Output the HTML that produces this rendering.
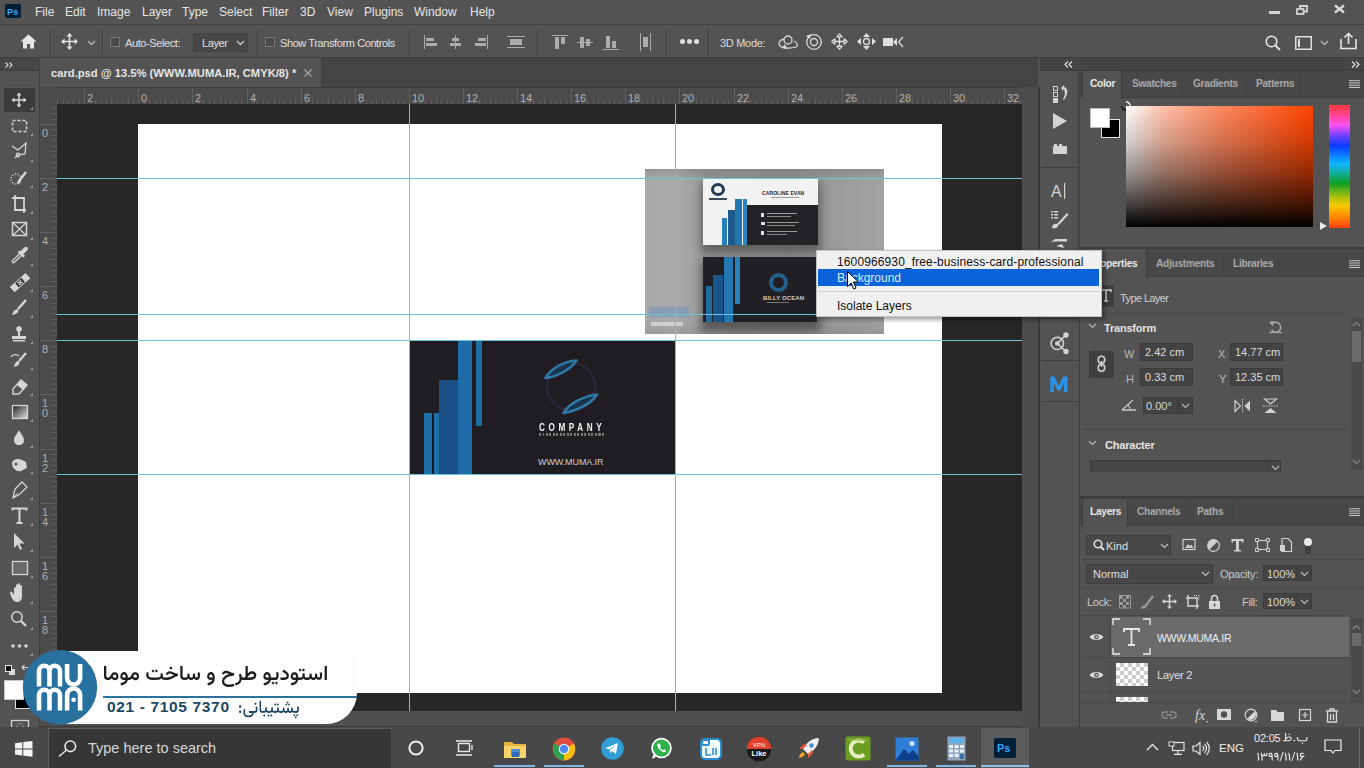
<!DOCTYPE html>
<html><head><meta charset="utf-8">
<style>
*{margin:0;padding:0;box-sizing:border-box}
html,body{width:1364px;height:768px;overflow:hidden;background:#535353;font-family:"Liberation Sans",sans-serif;color:#e6e6e6}
.a{position:absolute}
.t{position:absolute;white-space:nowrap;font-size:12px;line-height:14px}
.s{position:absolute;overflow:visible}
#menubar{left:0;top:0;width:1364px;height:24px;background:#535353}
#opts{left:0;top:24px;width:1364px;height:34px;background:#535353;border-top:1px solid #424242;border-bottom:1px solid #3e3e3e}
#tabbar{left:40px;top:58px;width:998px;height:29px;background:#444}
#tab{left:40px;top:58px;width:281px;height:29px;background:#535353}
#rulerT{left:40px;top:87px;width:982px;height:17px;background:#4b4b4b;border-top:1px solid #3c3c3c}
#rulerL{left:40px;top:87px;width:17px;height:624px;background:#4b4b4b}
#canvas{left:57px;top:104px;width:965px;height:607px;background:#282725}
#doc{left:138px;top:124px;width:804px;height:569px;background:#fff}
#tools{left:0;top:58px;width:40px;height:669px;background:#535353;border-right:1px solid #404040}
#vstrip{left:1022px;top:87px;width:18px;height:640px;background:#4c4c4c;border-right:2px solid #3a3a3a}
#hstrip{left:40px;top:711px;width:982px;height:16px;background:#4f4f4f;border-bottom:1px solid #3a3a3a}
#iconcol{left:1040px;top:58px;width:40px;height:669px;background:#535353;border-right:1px solid #3d3d3d}
#panel{left:1080px;top:58px;width:284px;height:669px;background:#535353}
#taskbar{left:0;top:727px;width:1364px;height:41px;background:#484848}
.gh{position:absolute;left:57px;width:965px;height:1px;background:#66c6e0}
.gv{position:absolute;top:104px;height:607px;width:1px;background:#66c6e0}
.sep{position:absolute;width:2px;background:#3f3f3f;border-right:1px solid #575757}
.rn{position:absolute;font-size:10px;line-height:10px;color:#b4b4b4}
.ptab{position:absolute;font-size:10.2px;line-height:12px;font-weight:bold;color:#a8a8a8;letter-spacing:-0.3px}
.fld{position:absolute;background:#434343;border:1px solid #3b3b3b;font-size:11px;line-height:15px;color:#dcdcdc;padding-left:4px;padding-top:1px}
</style></head><body>
<!-- MENU BAR -->
<div id="menubar" class="a">
  <div class="a" style="left:5px;top:4px;width:16px;height:14px;background:#001e36;border-radius:2px"></div>
  <div class="t" style="left:7px;top:5px;font-size:9px;color:#31a8ff;font-weight:bold">Ps</div>
  <div class="t" style="left:35px;top:5px">File</div>
  <div class="t" style="left:65px;top:5px">Edit</div>
  <div class="t" style="left:97px;top:5px">Image</div>
  <div class="t" style="left:142px;top:5px">Layer</div>
  <div class="t" style="left:182px;top:5px">Type</div>
  <div class="t" style="left:219px;top:5px">Select</div>
  <div class="t" style="left:262px;top:5px">Filter</div>
  <div class="t" style="left:300px;top:5px">3D</div>
  <div class="t" style="left:327px;top:5px">View</div>
  <div class="t" style="left:364px;top:5px">Plugins</div>
  <div class="t" style="left:414px;top:5px">Window</div>
  <div class="t" style="left:470px;top:5px">Help</div>
  <div class="a" style="left:1268.5px;top:11px;width:11px;height:3px;background:#d4d4d4"></div>
  <svg class="s" style="left:1296px;top:5px" width="12" height="10"><rect x="1" y="4" width="6.5" height="5" fill="none" stroke="#d4d4d4" stroke-width="1.8"/><path d="M4 3.5V1h7v5.5H8" fill="none" stroke="#d4d4d4" stroke-width="1.8"/></svg>
  <svg class="s" style="left:1334px;top:5px" width="11" height="8"><path d="M1 0.5L10 7.5M10 0.5L1 7.5" stroke="#dadada" stroke-width="2.3"/></svg>
</div>
<!-- OPTIONS BAR -->
<div id="opts" class="a">
  <svg class="s" style="left:20px;top:9px" width="17" height="15"><path d="M8.5 0.5L0.5 7.5H3V14.5H7V10H10V14.5H14V7.5H16.5Z" fill="#e6e6e6"/></svg>
  <div class="sep" style="left:50px;top:4px;height:25px"></div>
  <svg class="s" style="left:61px;top:8px" width="17" height="17"><path d="M8.5 1V16M1 8.5H16" stroke="#e0e0e0" stroke-width="1.6"/><path d="M8.5 0L5.5 3.5H11.5ZM8.5 17L5.5 13.5H11.5ZM0 8.5L3.5 5.5V11.5ZM17 8.5L13.5 5.5V11.5Z" fill="#e0e0e0"/></svg>
  <svg class="s" style="left:87px;top:15px" width="9" height="6"><path d="M1 1L4.5 4.5L8 1" fill="none" stroke="#b8b8b8" stroke-width="1.3"/></svg>
  <div class="sep" style="left:102px;top:4px;height:25px"></div>
  <div class="a" style="left:110px;top:12px;width:10px;height:10px;border:1px solid #777;background:#4a4a4a"></div>
  <div class="t" style="left:125px;top:11px;font-size:11px;letter-spacing:-0.4px;color:#e0e0e0">Auto-Select:</div>
  <div class="a" style="left:193px;top:8px;width:55px;height:19px;background:#474747;border:1px solid #424242"></div>
  <div class="t" style="left:202px;top:11px;font-size:11px;letter-spacing:-0.4px;color:#e0e0e0">Layer</div>
  <svg class="s" style="left:236px;top:15px" width="9" height="6"><path d="M1 1L4.5 4.5L8 1" fill="none" stroke="#c8c8c8" stroke-width="1.3"/></svg>
  <div class="sep" style="left:257px;top:4px;height:25px"></div>
  <div class="a" style="left:265px;top:12px;width:10px;height:10px;border:1px solid #777;background:#4a4a4a"></div>
  <div class="t" style="left:280px;top:11px;font-size:11px;letter-spacing:-0.4px;color:#e0e0e0">Show Transform Controls</div>
  <div class="sep" style="left:409px;top:4px;height:25px"></div>
  <!-- align icons -->
  <svg class="s" style="left:424px;top:10px" width="14" height="14"><path d="M0.5 0V14" stroke="#ababab"/><rect x="2" y="3" width="8" height="3" fill="#ababab"/><rect x="2" y="8" width="11" height="3" fill="#ababab"/></svg>
  <svg class="s" style="left:449px;top:10px" width="14" height="14"><path d="M6.5 0V14" stroke="#ababab"/><rect x="3" y="3" width="7" height="3" fill="#ababab"/><rect x="1" y="8" width="11" height="3" fill="#ababab"/></svg>
  <svg class="s" style="left:474px;top:10px" width="14" height="14"><path d="M13.5 0V14" stroke="#ababab"/><rect x="4" y="3" width="8" height="3" fill="#ababab"/><rect x="1" y="8" width="11" height="3" fill="#ababab"/></svg>
  <svg class="s" style="left:507px;top:10px" width="18" height="14"><path d="M0 1.5H18M0 12.5H18" stroke="#ababab"/><rect x="3" y="4" width="12" height="6" fill="#ababab"/></svg>
  <div class="sep" style="left:537px;top:4px;height:25px"></div>
  <svg class="s" style="left:552px;top:10px" width="16" height="16"><path d="M0 0.5H16" stroke="#ababab"/><rect x="3" y="2" width="4" height="12" fill="#ababab"/><rect x="9" y="2" width="4" height="7" fill="#ababab"/></svg>
  <svg class="s" style="left:577px;top:10px" width="16" height="16"><path d="M0 7.5H16" stroke="#ababab"/><rect x="3" y="2" width="4" height="11" fill="#ababab"/><rect x="9" y="4" width="4" height="7" fill="#ababab"/></svg>
  <svg class="s" style="left:603px;top:9px" width="16" height="16"><path d="M0 15.5H16" stroke="#ababab"/><rect x="3" y="2" width="4" height="12" fill="#ababab"/><rect x="9" y="7" width="4" height="7" fill="#ababab"/></svg>
  <svg class="s" style="left:640px;top:8px" width="11" height="18"><path d="M0.5 0V18M10.5 0V18" stroke="#ababab"/><rect x="3" y="4" width="5" height="10" fill="#ababab"/></svg>
  <div class="sep" style="left:666px;top:4px;height:25px"></div>
  <div class="a" style="left:680px;top:14px;width:5px;height:5px;border-radius:50%;background:#e0e0e0;box-shadow:7px 0 0 #e0e0e0,14px 0 0 #e0e0e0"></div>
  <div class="sep" style="left:708px;top:4px;height:25px"></div>
  <div class="t" style="left:720px;top:11px;font-size:11px;letter-spacing:-0.3px;color:#dcdcdc">3D Mode:</div>
  <svg class="s" style="left:778px;top:10px" width="21" height="15"><circle cx="10" cy="5" r="4" fill="none" stroke="#d8d8d8" stroke-width="1.3"/><path d="M6 4C1 5 0 8 2 11C4 13 12 14 18 12C20 11 20 8 16 6" fill="none" stroke="#d8d8d8" stroke-width="1.3"/><path d="M4 13L7 9L9 14Z" fill="#d8d8d8"/></svg>
  <svg class="s" style="left:805px;top:8px" width="18" height="18"><circle cx="9" cy="9" r="7.3" fill="none" stroke="#d8d8d8" stroke-width="1.3"/><circle cx="9" cy="9" r="3.5" fill="none" stroke="#d8d8d8" stroke-width="1.3"/><path d="M1 3L6 1L5 6Z" fill="#d8d8d8"/></svg>
  <svg class="s" style="left:831px;top:8px" width="17" height="17"><path d="M8.5 2V15M2 8.5H15" stroke="#e0e0e0" stroke-width="1.3"/><path d="M8.5 0.8L5.8 3.8H11.2ZM8.5 16.2L5.8 13.2H11.2ZM0.8 8.5L3.8 5.8V11.2ZM16.2 8.5L13.2 5.8V11.2Z" fill="#535353" stroke="#e0e0e0" stroke-width="1.2" stroke-linejoin="round"/><path d="M6 6.5H11M6 10.5H11" stroke="#e0e0e0" stroke-width="0"/></svg>
  <svg class="s" style="left:857px;top:8px" width="19" height="17"><circle cx="9.5" cy="8.5" r="3" fill="none" stroke="#e0e0e0" stroke-width="1.3"/><path d="M9.5 0L6 4H13ZM9.5 17L6 13H13ZM0 8.5L4 5V12ZM19 8.5L15 5V12Z" fill="#e0e0e0"/></svg>
  <svg class="s" style="left:883px;top:11px" width="21" height="12"><rect x="0" y="2" width="10" height="8" fill="#e0e0e0"/><path d="M10 6L14 2V10Z" fill="#e0e0e0"/><path d="M20 1L15.5 6L20 11" fill="none" stroke="#e0e0e0" stroke-width="1.2"/></svg>
  <!-- right -->
  <svg class="s" style="left:1265px;top:10px" width="16" height="16"><circle cx="6.5" cy="6.5" r="5.3" fill="none" stroke="#e6e6e6" stroke-width="1.6"/><path d="M10.5 10.5L15 15" stroke="#e6e6e6" stroke-width="1.8"/></svg>
  <svg class="s" style="left:1295px;top:11px" width="17" height="14"><rect x="0.75" y="0.75" width="15.5" height="12.5" fill="none" stroke="#e0e0e0" stroke-width="1.5"/><rect x="3" y="3" width="2" height="8" fill="#e0e0e0"/></svg>
  <svg class="s" style="left:1320px;top:15px" width="9" height="6"><path d="M1 1L4.5 4.5L8 1" fill="none" stroke="#b8b8b8" stroke-width="1.3"/></svg>
  <svg class="s" style="left:1340px;top:7px" width="17" height="18"><path d="M1 7V16.5H16V7" fill="none" stroke="#e6e6e6" stroke-width="1.6"/><path d="M8.5 12V1.5M4.5 5.5L8.5 1.5L12.5 5.5" fill="none" stroke="#e6e6e6" stroke-width="1.6"/></svg>
</div>
<!-- TABS / RULERS / CANVAS -->
<div id="tabbar" class="a"></div>
<div id="tab" class="a"><div class="t" style="left:11px;top:8px;font-weight:bold;font-size:11.2px">card.psd @ 13.5% (WWW.MUMA.IR, CMYK/8) *</div>
<svg class="s" style="left:264px;top:11px" width="8" height="8"><path d="M0.5 0.5L7.5 7.5M7.5 0.5L0.5 7.5" stroke="#a8a8a8" stroke-width="1.1"/></svg></div>
<div id="rulerT" class="a"></div>
<div id="rulerL" class="a"></div>
<!--RULERS-->
<svg class="s" style="left:40px;top:88px" width="982" height="16"><path d="M17.5 10V17M23.5 12V17M28.5 12V17M33.5 12V17M39.5 12V17M44.5 0V17M50.5 12V17M55.5 12V17M61.5 12V17M66.5 12V17M71.5 10V17M77.5 12V17M82.5 12V17M88.5 12V17M93.5 12V17M98.5 0V17M104.5 12V17M109.5 12V17M115.5 12V17M120.5 12V17M125.5 10V17M131.5 12V17M136.5 12V17M142.5 12V17M147.5 12V17M152.5 0V17M158.5 12V17M163.5 12V17M169.5 12V17M174.5 12V17M180.5 10V17M185.5 12V17M190.5 12V17M196.5 12V17M201.5 12V17M207.5 0V17M212.5 12V17M217.5 12V17M223.5 12V17M228.5 12V17M234.5 10V17M239.5 12V17M244.5 12V17M250.5 12V17M255.5 12V17M261.5 0V17M266.5 12V17M272.5 12V17M277.5 12V17M282.5 12V17M288.5 10V17M293.5 12V17M299.5 12V17M304.5 12V17M309.5 12V17M315.5 0V17M320.5 12V17M326.5 12V17M331.5 12V17M336.5 12V17M342.5 10V17M347.5 12V17M353.5 12V17M358.5 12V17M363.5 12V17M369.5 0V17M374.5 12V17M380.5 12V17M385.5 12V17M391.5 12V17M396.5 10V17M401.5 12V17M407.5 12V17M412.5 12V17M418.5 12V17M423.5 0V17M428.5 12V17M434.5 12V17M439.5 12V17M445.5 12V17M450.5 10V17M455.5 12V17M461.5 12V17M466.5 12V17M472.5 12V17M477.5 0V17M483.5 12V17M488.5 12V17M493.5 12V17M499.5 12V17M504.5 10V17M510.5 12V17M515.5 12V17M520.5 12V17M526.5 12V17M531.5 0V17M537.5 12V17M542.5 12V17M547.5 12V17M553.5 12V17M558.5 10V17M564.5 12V17M569.5 12V17M574.5 12V17M580.5 12V17M585.5 0V17M591.5 12V17M596.5 12V17M602.5 12V17M607.5 12V17M612.5 10V17M618.5 12V17M623.5 12V17M629.5 12V17M634.5 12V17M639.5 0V17M645.5 12V17M650.5 12V17M656.5 12V17M661.5 12V17M666.5 10V17M672.5 12V17M677.5 12V17M683.5 12V17M688.5 12V17M694.5 0V17M699.5 12V17M704.5 12V17M710.5 12V17M715.5 12V17M721.5 10V17M726.5 12V17M731.5 12V17M737.5 12V17M742.5 12V17M748.5 0V17M753.5 12V17M758.5 12V17M764.5 12V17M769.5 12V17M775.5 10V17M780.5 12V17M785.5 12V17M791.5 12V17M796.5 12V17M802.5 0V17M807.5 12V17M813.5 12V17M818.5 12V17M823.5 12V17M829.5 10V17M834.5 12V17M840.5 12V17M845.5 12V17M850.5 12V17M856.5 0V17M861.5 12V17M867.5 12V17M872.5 12V17M877.5 12V17M883.5 10V17M888.5 12V17M894.5 12V17M899.5 12V17M904.5 12V17M910.5 0V17M915.5 12V17M921.5 12V17M926.5 12V17M932.5 12V17M937.5 10V17M942.5 12V17M948.5 12V17M953.5 12V17M959.5 12V17M964.5 0V17M969.5 12V17M975.5 12V17M980.5 12V17" stroke="#616161" stroke-width="1"/><g font-size="11" fill="#b0b0b0" font-family="Liberation Sans"><text x="47.0" y="13.5">2</text><text x="101.0" y="13.5">0</text><text x="155.0" y="13.5">2</text><text x="210.0" y="13.5">4</text><text x="264.0" y="13.5">6</text><text x="318.0" y="13.5">8</text><text x="372.0" y="13.5">10</text><text x="426.0" y="13.5">12</text><text x="480.0" y="13.5">14</text><text x="534.0" y="13.5">16</text><text x="588.0" y="13.5">18</text><text x="642.0" y="13.5">20</text><text x="697.0" y="13.5">22</text><text x="751.0" y="13.5">24</text><text x="805.0" y="13.5">26</text><text x="859.0" y="13.5">28</text><text x="913.0" y="13.5">30</text><text x="967.0" y="13.5">32</text></g></svg>
<svg class="s" style="left:40px;top:104px" width="17" height="607"><path d="M12 4.5H17M12 9.5H17M12 15.5H17M0 20.5H17M12 25.5H17M12 31.5H17M12 36.5H17M12 42.5H17M10 47.5H17M12 52.5H17M12 58.5H17M12 63.5H17M12 69.5H17M0 74.5H17M12 80.5H17M12 85.5H17M12 90.5H17M12 96.5H17M10 101.5H17M12 107.5H17M12 112.5H17M12 117.5H17M12 123.5H17M0 128.5H17M12 134.5H17M12 139.5H17M12 144.5H17M12 150.5H17M10 155.5H17M12 161.5H17M12 166.5H17M12 171.5H17M12 177.5H17M0 182.5H17M12 188.5H17M12 193.5H17M12 199.5H17M12 204.5H17M10 209.5H17M12 215.5H17M12 220.5H17M12 226.5H17M12 231.5H17M0 236.5H17M12 242.5H17M12 247.5H17M12 253.5H17M12 258.5H17M10 263.5H17M12 269.5H17M12 274.5H17M12 280.5H17M12 285.5H17M0 290.5H17M12 296.5H17M12 301.5H17M12 307.5H17M12 312.5H17M10 318.5H17M12 323.5H17M12 328.5H17M12 334.5H17M12 339.5H17M0 345.5H17M12 350.5H17M12 355.5H17M12 361.5H17M12 366.5H17M10 372.5H17M12 377.5H17M12 382.5H17M12 388.5H17M12 393.5H17M0 399.5H17M12 404.5H17M12 410.5H17M12 415.5H17M12 420.5H17M10 426.5H17M12 431.5H17M12 437.5H17M12 442.5H17M12 447.5H17M0 453.5H17M12 458.5H17M12 464.5H17M12 469.5H17M12 474.5H17M10 480.5H17M12 485.5H17M12 491.5H17M12 496.5H17M12 501.5H17M0 507.5H17M12 512.5H17M12 518.5H17M12 523.5H17M12 529.5H17M10 534.5H17M12 539.5H17M12 545.5H17M12 550.5H17M12 556.5H17M0 561.5H17M12 566.5H17M12 572.5H17M12 577.5H17M12 583.5H17M10 588.5H17M12 593.5H17M12 599.5H17M12 604.5H17" stroke="#616161" stroke-width="1"/><g font-size="11" fill="#b0b0b0" font-family="Liberation Sans"><text x="2" y="32.5">0</text><text x="2" y="86.5">2</text><text x="2" y="140.5">4</text><text x="2" y="194.5">6</text><text x="2" y="248.5">8</text><text x="2" y="302.5">1</text><text x="2" y="312.5">0</text><text x="2" y="357.5">1</text><text x="2" y="367.5">2</text><text x="2" y="411.5">1</text><text x="2" y="421.5">4</text><text x="2" y="465.5">1</text><text x="2" y="475.5">6</text><text x="2" y="519.5">1</text><text x="2" y="529.5">8</text><text x="2" y="573.5">2</text><text x="2" y="583.5">0</text></g></svg>
<!--/RULERS-->
<div id="canvas" class="a"></div>
<div id="doc" class="a"></div>
<!-- gray mockup image -->
<div class="a" style="left:645px;top:169px;width:239px;height:165px;overflow:hidden;background:linear-gradient(to bottom,rgba(0,0,0,0.12) 0,rgba(0,0,0,0) 12px,rgba(0,0,0,0) 150px,rgba(0,0,0,0.08) 165px),linear-gradient(to right,#a9a9a9 0%,#ababab 14%,#989898 26%,#939393 60%,#9a9a9a 76%,#a3a3a3 100%)">
<div class="a" style="left:56px;top:14px;width:120px;height:70px;background:rgba(30,30,30,0.45);filter:blur(4px)"></div>
<div class="a" style="left:56px;top:92px;width:120px;height:70px;background:rgba(30,30,30,0.5);filter:blur(4px)"></div></div>
<div class="a" style="left:703px;top:179px;width:115px;height:66px;background:#f2f2f2;overflow:hidden">
  <div class="a" style="left:42px;top:26px;width:73px;height:40px;background:#232327"></div>
  <div class="a" style="left:19px;top:39px;width:5px;height:27px;background:#2b7fb8"></div>
  <div class="a" style="left:25px;top:31px;width:7px;height:35px;background:#1d5a8e"></div>
  <div class="a" style="left:32px;top:20px;width:7px;height:46px;background:#2377b0"></div>
  <div class="a" style="left:40px;top:20px;width:4px;height:46px;background:#2a86c0"></div>
  <div class="a" style="left:8px;top:4px;width:14px;height:13px;border-radius:50%;border:3px solid #223a55"></div>
  <div class="a" style="left:6px;top:19px;width:18px;height:2px;background:#3a4a5a"></div>
  <div class="t" style="left:59px;top:11px;font-size:5px;line-height:6px;font-weight:bold;color:#2a2a2a;letter-spacing:0.1px">CAROLINE EVAN</div>
  <div class="a" style="left:68px;top:18px;width:28px;height:1px;background:#999"></div>
  <div class="a" style="left:58px;top:34px;width:3px;height:4px;background:#ddd"></div>
  <div class="a" style="left:64px;top:34px;width:30px;height:1px;background:#999"></div>
  <div class="a" style="left:64px;top:37px;width:24px;height:1px;background:#888"></div>
  <div class="a" style="left:58px;top:43px;width:4px;height:3px;background:#ddd"></div>
  <div class="a" style="left:64px;top:43px;width:32px;height:1px;background:#999"></div>
  <div class="a" style="left:64px;top:46px;width:28px;height:1px;background:#888"></div>
  <div class="a" style="left:58px;top:52px;width:3px;height:4px;background:#ddd"></div>
  <div class="a" style="left:64px;top:52px;width:30px;height:1px;background:#999"></div>
  <div class="a" style="left:64px;top:55px;width:20px;height:1px;background:#888"></div>
</div>
<div class="a" style="left:703px;top:257px;width:114px;height:65px;background:#202024;overflow:hidden">
  <div class="a" style="left:3px;top:29px;width:6px;height:36px;background:#1f6aa0"></div>
  <div class="a" style="left:10px;top:18px;width:10px;height:47px;background:#1a548a"></div>
  <div class="a" style="left:21px;top:0px;width:9px;height:65px;background:#2478b2"></div>
  <div class="a" style="left:32px;top:0px;width:5px;height:47px;background:#2a82ba"></div>
  <div class="a" style="left:66px;top:16px;width:19px;height:19px;border-radius:50%;border:4px solid #255f8c"></div>
  <div class="t" style="left:60px;top:38px;font-size:6px;line-height:6px;font-weight:bold;color:#d0d0d0;letter-spacing:0.1px">BILLY OCEAN</div>
  <div class="a" style="left:64px;top:45px;width:22px;height:1px;background:#777"></div>
</div>
<div class="a" style="left:649px;top:307px;width:40px;height:10px;background:rgba(70,130,200,0.35);filter:blur(1.5px)"></div>
<div class="a" style="left:651px;top:322px;width:32px;height:4px;background:rgba(235,235,235,0.6)"></div>
<!-- dark card -->
<div class="a" style="left:410px;top:341px;width:265px;height:133px;background:#1f1d22;overflow:hidden">
  <div class="a" style="left:14px;top:72px;width:8px;height:61px;background:#1e6fa5"></div>
  <div class="a" style="left:24px;top:72px;width:8px;height:61px;background:#1e6fa5"></div>
  <div class="a" style="left:29px;top:39px;width:19px;height:94px;background:#1a4f85"></div>
  <div class="a" style="left:48px;top:0;width:14px;height:133px;background:#1f6aa8"></div>
  <div class="a" style="left:66px;top:0;width:6px;height:85px;background:#1c6ea0"></div>
  <svg class="s" style="left:133px;top:18px" width="58" height="56">
    <circle cx="28" cy="27.5" r="24" fill="none" stroke="#2a2536" stroke-width="3"/>
    <path d="M2.5 19C8 9 22 2 33.5 1.5C29 9 15 18 2.5 19Z" fill="#18334c" stroke="#2f78a6" stroke-width="2.6" stroke-linejoin="round"/>
    <path d="M20.5 54C26 44 41 37 54 35.5C49 44 34 52 20.5 54Z" fill="#18334c" stroke="#2f78a6" stroke-width="2.6" stroke-linejoin="round"/>
  </svg>
  <div class="t" style="left:129px;top:81px;font-size:11px;line-height:11px;font-weight:bold;color:#f4f4f4;letter-spacing:4.9px;transform:scaleX(0.74);transform-origin:0 0">COMPANY</div>
  <div class="a" style="left:129px;top:92px;width:65px;height:3px;background:repeating-linear-gradient(to right,#777 0 2px,transparent 2px 3.5px)"></div>
  <div class="t" style="left:128px;top:117px;font-size:9px;line-height:9px;color:#cfcfcf;letter-spacing:-0.1px">WWW.MUMA.IR</div>
</div>
<div class="gh" style="top:178px"></div>
<div class="gh" style="top:314px"></div>
<div class="gh" style="top:340px"></div>
<div class="gh" style="top:474px"></div>
<div class="gv" style="left:409px"></div>
<div class="gv" style="left:675px"></div>
<div id="vstrip" class="a"></div>
<div id="hstrip" class="a"></div>
<!-- TOOLS -->
<div id="tools" class="a">
  <div class="a" style="left:0;top:0;width:39px;height:13px;background:#464646;border-bottom:1px solid #3c3c3c"></div>
  <svg class="s" style="left:5px;top:4px" width="9" height="6"><path d="M0.5 0.5L3 3L0.5 5.5M4.5 0.5L7 3L4.5 5.5" fill="none" stroke="#d0d0d0" stroke-width="1.2"/></svg>
  <div class="a" style="left:4px;top:16px;width:31px;height:12px;border-bottom:1px solid #4a4a4a"></div>
  <div class="a" style="left:4px;top:30px;width:31px;height:24px;background:#3b3b3b"></div>
</div>
<svg class="s" style="left:0;top:58px" width="40" height="669">
 <g fill="#d6d6d6" stroke="none">
  <!-- small triangles -->
  <path d="M30 52h3v-3zM30 78h3v-3zM30 104h3v-3zM30 130h3v-3zM30 156h3v-3zM30 182h3v-3zM30 208h3v-3zM30 234h3v-3zM30 260h3v-3zM30 286h3v-3zM30 312h3v-3zM30 338h3v-3zM30 364h3v-3zM30 390h3v-3zM30 416h3v-3zM30 442h3v-3zM30 468h3v-3zM30 494h3v-3zM30 520h3v-3zM30 546h3v-3zM30 572h3v-3zM30 598h3v-3z" fill="#9a9a9a"/>
 </g>
 <g fill="none" stroke="#d6d6d6" stroke-width="1.5">
  <!-- move y42 -->
  <path d="M19 35V49M12 42H26"/>
  <path d="M19 34.5L16.5 37.5H21.5ZM19 49.5L16.5 46.5H21.5ZM11.5 42L14.5 39.5V44.5ZM26.5 42L23.5 39.5V44.5Z" fill="#d6d6d6" stroke="none"/>
  <!-- marquee y68 -->
  <rect x="12.5" y="62.5" width="14" height="11" stroke-dasharray="3 2"/>
  <!-- lasso y93 -->
  <path d="M12 88L18 92L26 85L25 96L18 97L15 100" stroke-width="1.3"/>
  <circle cx="18" cy="97" r="1.8" stroke-width="1.2"/>
  <!-- quick select y120 -->
  <circle cx="16" cy="121" r="5" stroke-dasharray="1.2 1.5" stroke-width="1.4"/>
  <path d="M19 123L26 114" stroke-width="2.5"/>
  <path d="M17 126C17 122 19 121 21 123C21 125 19 126 17 126Z" fill="#d6d6d6" stroke="none"/>
  <!-- crop y145 -->
  <path d="M15 137V152H26M12 140H24V155" stroke-width="1.8"/>
  <!-- frame y171 -->
  <rect x="12.5" y="164.5" width="14" height="13"/>
  <path d="M12.5 164.5L26.5 177.5M26.5 164.5L12.5 177.5" stroke-width="1.2"/>
  <!-- eyedropper y197 -->
  <path d="M13.6 203.4L20.6 196.4" stroke-width="3.8" stroke-linecap="round"/>
  <path d="M13.6 203.4L20.6 196.4" stroke="#535353" stroke-width="1.3" stroke-linecap="round"/>
  <path d="M21.8 194.8L26 190.8" stroke-width="4" stroke-linecap="round"/>
  <path d="M18.6 193.4L24.2 198.8" stroke-width="2.6"/>
  <!-- healing y224 -->
  <path d="M12.2 231.6L28 217.6" stroke-width="7.2"/>
  <path d="M17 227.3L23.2 221.9" stroke="#3a3a3a" stroke-width="5.6"/>
  <circle cx="20.1" cy="224.6" r="0.9" fill="#e6e6e6" stroke="none"/><circle cx="18.3" cy="224.4" r="0.9" fill="#e6e6e6" stroke="none"/><circle cx="21.9" cy="224.8" r="0.9" fill="#e6e6e6" stroke="none"/><circle cx="20.3" cy="222.8" r="0.9" fill="#e6e6e6" stroke="none"/><circle cx="19.9" cy="226.4" r="0.9" fill="#e6e6e6" stroke="none"/>
  <!-- brush y250 -->
  <path d="M18 251L26 242" stroke-width="2.5"/>
  <path d="M12 257C13 253 15 251 18 251C19 253 18 256 12 257Z" fill="#d6d6d6" stroke="none"/>
  <!-- stamp y275 -->
  <circle cx="19" cy="271" r="2.8" fill="#d6d6d6" stroke="none"/>
  <path d="M18 273h2v5h-2zM12 278h14v3h-14zM13 282h12v1.5h-12z" fill="#d6d6d6" stroke="none"/>
  <!-- history brush y302 -->
  <path d="M19 303L26 295" stroke-width="2.3"/>
  <path d="M14 309C15 305 16 303 19 303C20 305 19 308 14 309Z" fill="#d6d6d6" stroke="none"/>
  <path d="M11 299C13 296 17 296 19 298" stroke-width="1.2"/>
  <!-- eraser y329 -->
  <path d="M13 331L21 322L27 327L19 336H13Z" stroke-width="1.4"/>
  <path d="M17 327L23 332L27 327L21 322Z" fill="#d6d6d6" stroke="none"/>
  <!-- gradient y354 -->
  <defs><linearGradient id="gg" x1="0" y1="0" x2="1" y2="1"><stop offset="0" stop-color="#222"/><stop offset="1" stop-color="#ddd"/></linearGradient></defs>
  <rect x="12.5" y="347.5" width="15" height="13" fill="url(#gg)" stroke-width="1.3"/>
  <!-- blur y381 -->
  <path d="M19 372C17 376 14 379 14 382C14 385 16 387 19 387C22 387 24 385 24 382C24 379 21 376 19 372Z" fill="#d6d6d6" stroke="none"/>
  <!-- dodge y406 -->
  <path d="M12 405C13 401 18 400 22 402L26 404L27 410L21 413C17 414 12 411 12 405Z" fill="#d6d6d6" stroke="none"/>
  <circle cx="16" cy="406" r="1.5" fill="#535353" stroke="none"/>
  <!-- pen y432 -->
  <path d="M13 440L15 431L22 424L27 429L20 436Z" stroke-width="1.3"/>
  <path d="M13 440L18 435" stroke-width="1"/>
  <!-- type y458 -->
  <path d="M12.5 452.5V450.5H26.5V452.5M19.5 450.5V465M16.5 465H22.5" stroke-width="2"/>
  <!-- path select y483 -->
  <path d="M14 475L14 490L17.5 486.5L20 492L22 491L19.5 485.5L24.5 485.5Z" fill="#d6d6d6" stroke="none"/>
  <!-- rect y510 -->
  <rect x="12.5" y="503.5" width="15" height="13" fill="#6a6a6a" stroke-width="1.3"/>
  <!-- hand y536 -->
  <path d="M14 537V530C14 529 16 529 16 530V535V527C16 526 18 526 18 527V535V526C18 525 20 525 20 526V535V528C20 527 22 527 22 528V538C22 542 20 544 17 544C14 544 12 541 11 538L10 535C10 534 11 533 12 534Z" fill="#d6d6d6" stroke="none"/>
  <!-- zoom y561 -->
  <circle cx="17" cy="559" r="5.2" stroke-width="1.5"/>
  <path d="M21 563L26 568" stroke-width="2.3"/>
  <!-- more y588 -->
  <circle cx="13" cy="588" r="1.8" fill="#d6d6d6" stroke="none"/><circle cx="19.5" cy="588" r="1.8" fill="#d6d6d6" stroke="none"/><circle cx="26" cy="588" r="1.8" fill="#d6d6d6" stroke="none"/>
  <!-- fg bg mini -->
  <rect x="9.5" y="611.5" width="5" height="5" fill="#d6d6d6" stroke="#d6d6d6" stroke-width="1"/>
  <rect x="5.5" y="607.5" width="6" height="6" fill="#111" stroke="#e6e6e6" stroke-width="1"/>
  <path d="M22 609.5H28M24.5 607L22 609.5L24.5 612" stroke-width="1.2"/>
  <!-- bg / fg swatches -->
  <rect x="15.5" y="632.5" width="16" height="18" fill="#000" stroke="#e0e0e0" stroke-width="1"/>
  <rect x="4.5" y="622.5" width="19" height="19" fill="#fff" stroke="#c8c8c8" stroke-width="1"/>
  <!-- quick mask -->
  <rect x="11.5" y="662.5" width="17" height="12" stroke-width="1.3"/>
  <circle cx="20" cy="668.5" r="3" stroke-dasharray="1 1.2" stroke-width="1"/>
 </g>
</svg>
<!-- RIGHT -->
<div id="iconcol" class="a"></div>
<div id="panel" class="a"></div>
<div class="a" style="left:1040px;top:58px;width:324px;height:13px;background:#444;border-bottom:1px solid #3a3a3a"></div>
<svg class="s" style="left:1064px;top:61px" width="9" height="7"><path d="M4 0.5L1 3.5L4 6.5M8 0.5L5 3.5L8 6.5" fill="none" stroke="#d8d8d8" stroke-width="1.3"/></svg>
<svg class="s" style="left:1351px;top:61px" width="9" height="7"><path d="M1 0.5L4 3.5L1 6.5M5 0.5L8 3.5L5 6.5" fill="none" stroke="#d8d8d8" stroke-width="1.3"/></svg>
<!-- icon column groups -->
<div class="a" style="left:1041px;top:72px;width:37px;height:96px;border-bottom:1px solid #3f3f3f;border-right:1px solid #474747"></div>
<div class="a" style="left:1041px;top:168px;width:37px;height:88px;border-right:1px solid #474747"></div>
<div class="a" style="left:1041px;top:318px;width:37px;height:84px;border-top:1px solid #3f3f3f;border-bottom:1px solid #3f3f3f"></div>
<div class="a" style="left:1041px;top:360px;width:37px;height:1px;background:#3f3f3f"></div>
<svg class="s" style="left:1040px;top:72px" width="40" height="330">
 <g fill="#d4d4d4">
  <rect x="13.5" y="14.5" width="4" height="4" fill="none" stroke="#d4d4d4"/>
  <rect x="13.5" y="20.5" width="4" height="4" fill="none" stroke="#d4d4d4"/>
  <rect x="13" y="26" width="5" height="5"/>
  <path d="M21 16L24 13L24 15C28 16 29 21 24 28L23 27C26 22 25 18 23 17L23 19Z"/>
  <path d="M13 41V57L27 49Z"/>
  <path d="M13 74H27V82H13ZM14 72H17V74H14ZM19 72H22V74H19Z"/>
  <text x="11" y="125" font-size="16" font-family="Liberation Sans" fill="#d4d4d4">A</text>
  <rect x="24" y="111" width="1.2" height="16"/>
  <path d="M11 139h2v1.5h-2zM14 139h4v1.5h-4zM11 142h2v1.5h-2zM14 142h4v1.5h-4zM11 145h2v1.5h-2zM14 145h4v1.5h-4z"/>
  <path d="M17 152L27 141L28.5 142.5L19 153Z"/>
  <path d="M12 156C12 152 15 151 18 152C19 155 16 157 12 156Z"/>
  <path d="M11 170L15 167H27V169.5H15Z"/>
  <path d="M16 174L22 172L24 176Z"/>
 </g>
 <g fill="none" stroke="#d4d4d4" stroke-width="1.5">
  <circle cx="17.3" cy="271.4" r="6.2"/>
  <path d="M17.3 271.4L26 263M17.3 271.4L26 279.5"/>
 </g>
 <g fill="#d4d4d4"><circle cx="26" cy="263" r="2.7"/><circle cx="26" cy="279.5" r="2.7"/><circle cx="17.3" cy="271.4" r="2.2"/></g>
 <path d="M10.3 320.2V304.6H14.3L18.8 313.5L23.3 304.6H27.5V320.2H24V311L20.2 318.5H17.4L13.8 311V320.2Z" fill="#2a93e8"/>
</svg>
<!-- COLOR PANEL -->
<div class="a" style="left:1080px;top:71px;width:284px;height:27px;background:#484848;border-bottom:1px solid #404040"></div>
<div class="a" style="left:1082px;top:71px;width:40px;height:28px;background:#535353;border-left:1px solid #3c3c3c;border-right:1px solid #3f3f3f"></div>
<div class="a" style="left:1182px;top:74px;width:1px;height:22px;background:#404040"></div>
<div class="a" style="left:1246px;top:74px;width:1px;height:22px;background:#404040"></div>
<div class="a" style="left:1300px;top:74px;width:1px;height:22px;background:#404040"></div>
<div class="ptab" style="left:1090px;top:78px;color:#e8e8e8">Color</div>
<div class="ptab" style="left:1132px;top:78px">Swatches</div>
<div class="ptab" style="left:1193px;top:78px">Gradients</div>
<div class="ptab" style="left:1256px;top:78px">Patterns</div>
<svg class="s" style="left:1349px;top:80px" width="11" height="9"><path d="M0 0.75H11M0 3H11M0 5.25H11M0 7.5H11" stroke="#c8c8c8" stroke-width="1.1"/></svg>
<div class="a" style="left:1101px;top:119px;width:19px;height:19px;background:#000;border:1px solid #e0e0e0"></div>
<div class="a" style="left:1090px;top:108px;width:20px;height:20px;background:#fff;border:1px solid #bbb"></div>
<div class="a" style="left:1126px;top:106px;width:187px;height:121px;background:linear-gradient(to bottom,rgba(0,0,0,0) 0%,rgba(0,0,0,0.18) 30%,rgba(0,0,0,0.42) 55%,rgba(0,0,0,0.72) 80%,#000 100%),linear-gradient(to right,#fff 0%,#ffc0a8 20%,#ff8a60 50%,#ff4400 100%)"></div>
<svg class="s" style="left:1121px;top:101px" width="10" height="10"><path d="M5 0.8A4.2 4.2 0 0 1 9.2 5" fill="none" stroke="#fff" stroke-width="1.2"/><path d="M0.8 5A4.2 4.2 0 0 0 5 9.2" fill="none" stroke="#000" stroke-width="1.2"/></svg>
<div class="a" style="left:1329px;top:105px;width:21px;height:123px;background:linear-gradient(to bottom,#ff3838 0%,#ff50f0 16%,#7040ff 25%,#0a3cff 33%,#10b8ff 48%,#10a020 64%,#a0c010 74%,#f8c800 82%,#ff7800 93%,#ff4010 100%)"></div>
<svg class="s" style="left:1319px;top:221px" width="9" height="10"><path d="M1 1V9L8 5Z" fill="#e8e8e8"/></svg>
<div class="a" style="left:1080px;top:247px;width:284px;height:2px;background:#3e3e3e"></div>
<!-- PROPERTIES PANEL -->
<div class="a" style="left:1080px;top:249px;width:284px;height:28px;background:#484848;border-bottom:1px solid #404040"></div>
<div class="a" style="left:1082px;top:249px;width:65px;height:29px;background:#535353;border-left:1px solid #3c3c3c;border-right:1px solid #3f3f3f"></div>
<div class="a" style="left:1223px;top:253px;width:1px;height:22px;background:#404040"></div>
<div class="a" style="left:1278px;top:253px;width:1px;height:22px;background:#404040"></div>
<div class="ptab" style="left:1090px;top:258px;color:#e8e8e8">Properties</div>
<div class="ptab" style="left:1156px;top:258px">Adjustments</div>
<div class="ptab" style="left:1233px;top:258px">Libraries</div>
<svg class="s" style="left:1349px;top:260px" width="11" height="9"><path d="M0 0.75H11M0 3H11M0 5.25H11M0 7.5H11" stroke="#c8c8c8" stroke-width="1.1"/></svg>
<div class="a" style="left:1099px;top:285px;width:15px;height:22px;background:#3f3f3f"></div>
<svg class="s" style="left:1100px;top:289px" width="12" height="13"><path d="M1 3V1H11V3M6 1V12M4 12H8" fill="none" stroke="#d0d0d0" stroke-width="1.5"/></svg>
<div class="t" style="left:1120px;top:291px;font-size:11px;color:#cfcfcf;letter-spacing:-0.6px">Type Layer</div>
<div class="a" style="left:1082px;top:313px;width:264px;height:1px;background:#474747"></div>
<svg class="s" style="left:1088px;top:323px" width="9" height="6"><path d="M1 1L4.5 4.5L8 1" fill="none" stroke="#b8b8b8" stroke-width="1.2"/></svg>
<div class="t" style="left:1104px;top:321px;font-size:11px;font-weight:bold;color:#e4e4e4;letter-spacing:-0.2px">Transform</div>
<svg class="s" style="left:1268px;top:320px" width="15" height="14"><path d="M3.5 4.5A5 5 0 1 1 3.5 10" fill="none" stroke="#aaa" stroke-width="1.4"/><path d="M1 2L5 6L6 1Z" fill="#aaa"/><path d="M1 12.5H14" stroke="#aaa" stroke-width="1.2"/></svg>
<div class="a" style="left:1089px;top:351px;width:25px;height:27px;background:#3f3f3f"></div>
<svg class="s" style="left:1096px;top:355px" width="11" height="18"><rect x="2.2" y="1.2" width="6.5" height="7" rx="3.2" fill="none" stroke="#d0d0d0" stroke-width="1.6"/><rect x="2.2" y="9.2" width="6.5" height="7" rx="3.2" fill="none" stroke="#d0d0d0" stroke-width="1.6"/><path d="M5.5 6V12" stroke="#d0d0d0" stroke-width="1.6"/></svg>
<div class="t" style="left:1124px;top:347px;font-size:11px;color:#b8b8b8">W</div>
<div class="fld" style="left:1140px;top:343px;width:53px;height:18px">2.42 cm</div>
<div class="t" style="left:1218px;top:347px;font-size:11px;color:#b8b8b8">X</div>
<div class="fld" style="left:1230px;top:343px;width:53px;height:18px">14.77 cm</div>
<div class="t" style="left:1126px;top:372px;font-size:11px;color:#b8b8b8">H</div>
<div class="fld" style="left:1140px;top:368px;width:53px;height:18px">0.33 cm</div>
<div class="t" style="left:1219px;top:372px;font-size:11px;color:#b8b8b8">Y</div>
<div class="fld" style="left:1230px;top:368px;width:53px;height:18px">12.35 cm</div>
<svg class="s" style="left:1121px;top:399px" width="16" height="12"><path d="M1 11H15M1 11L12 1" fill="none" stroke="#c8c8c8" stroke-width="1.3"/><path d="M7 6A6 6 0 0 1 9 11" fill="none" stroke="#c8c8c8" stroke-width="1.1"/></svg>
<div class="fld" style="left:1143px;top:397px;width:50px;height:17px;line-height:14px;padding-left:2px">0.00&#176;</div>
<div class="a" style="left:1178px;top:398px;width:1px;height:15px;background:#3b3b3b"></div>
<svg class="s" style="left:1181px;top:403px" width="9" height="6"><path d="M1 1L4.5 4.5L8 1" fill="none" stroke="#b8b8b8" stroke-width="1.2"/></svg>
<svg class="s" style="left:1234px;top:399px" width="17" height="14"><path d="M1 1.5V12.5L6.5 7Z" fill="none" stroke="#d0d0d0" stroke-width="1.2"/><path d="M16 1.5V12.5L10.5 7Z" fill="#d0d0d0"/><path d="M8.5 0V14" stroke="#d0d0d0" stroke-dasharray="1.5 1.2"/></svg>
<svg class="s" style="left:1263px;top:398px" width="15" height="16"><path d="M1.5 1H13.5L7.5 6Z" fill="none" stroke="#d0d0d0" stroke-width="1.2"/><path d="M1.5 15H13.5L7.5 10Z" fill="#d0d0d0"/><path d="M0 8H15" stroke="#d0d0d0" stroke-dasharray="1.5 1.2"/></svg>
<div class="a" style="left:1082px;top:429px;width:264px;height:1px;background:#474747"></div>
<svg class="s" style="left:1088px;top:440px" width="9" height="6"><path d="M1 1L4.5 4.5L8 1" fill="none" stroke="#b8b8b8" stroke-width="1.2"/></svg>
<div class="t" style="left:1105px;top:438px;font-size:11px;font-weight:bold;color:#e4e4e4;letter-spacing:-0.2px">Character</div>
<div class="a" style="left:1090px;top:460px;width:191px;height:12px;background:#454545;border:1px solid #3b3b3b;border-bottom:none"></div>
<div class="a" style="left:1268px;top:460px;width:1px;height:12px;background:#3b3b3b"></div>
<svg class="s" style="left:1271px;top:465px" width="9" height="6"><path d="M1 1L4.5 4.5L8 1" fill="none" stroke="#b8b8b8" stroke-width="1.2"/></svg>
<div class="a" style="left:1351px;top:318px;width:11px;height:152px;background:#4a4a4a"></div>
<svg class="s" style="left:1352px;top:321px" width="9" height="6"><path d="M1 5L4.5 1.5L8 5" fill="none" stroke="#8a8a8a" stroke-width="1.1"/></svg>
<div class="a" style="left:1352px;top:331px;width:9px;height:31px;background:#6a6a6a"></div>
<svg class="s" style="left:1352px;top:459px" width="9" height="6"><path d="M1 1L4.5 4.5L8 1" fill="none" stroke="#8a8a8a" stroke-width="1.1"/></svg>
<div class="a" style="left:1080px;top:496px;width:284px;height:3px;background:#3e3e3e"></div>
<!-- LAYERS PANEL -->
<div class="a" style="left:1080px;top:499px;width:284px;height:27px;background:#484848;border-bottom:1px solid #404040"></div>
<div class="a" style="left:1082px;top:499px;width:46px;height:28px;background:#535353;border-left:1px solid #3c3c3c;border-right:1px solid #3f3f3f"></div>
<div class="a" style="left:1186px;top:503px;width:1px;height:22px;background:#404040"></div>
<div class="a" style="left:1232px;top:503px;width:1px;height:22px;background:#404040"></div>
<div class="ptab" style="left:1090px;top:506px;color:#e8e8e8">Layers</div>
<div class="ptab" style="left:1137px;top:506px">Channels</div>
<div class="ptab" style="left:1197px;top:506px">Paths</div>
<svg class="s" style="left:1349px;top:508px" width="11" height="9"><path d="M0 0.75H11M0 3H11M0 5.25H11M0 7.5H11" stroke="#c8c8c8" stroke-width="1.1"/></svg>
<div class="a" style="left:1086px;top:535px;width:85px;height:20px;background:#474747;border:1px solid #3d3d3d"></div>
<svg class="s" style="left:1093px;top:539px" width="12" height="12"><circle cx="5" cy="5" r="3.8" fill="none" stroke="#e0e0e0" stroke-width="1.6"/><path d="M7.8 7.8L11 11" stroke="#e0e0e0" stroke-width="2"/></svg>
<div class="t" style="left:1106px;top:539px;font-size:11px;color:#e0e0e0">Kind</div>
<svg class="s" style="left:1160px;top:543px" width="9" height="6"><path d="M1 1L4.5 4.5L8 1" fill="none" stroke="#c0c0c0" stroke-width="1.2"/></svg>
<svg class="s" style="left:1182px;top:537px" width="135" height="18">
 <g fill="none" stroke="#d0d0d0" stroke-width="1.2"><rect x="1" y="2.5" width="12" height="10"/></g>
 <path d="M3 11L6 7L8 9L9.5 7.5L11.5 11Z" fill="#d0d0d0"/>
 <circle cx="31.5" cy="8.5" r="5.8" fill="none" stroke="#d0d0d0" stroke-width="1.3"/><path d="M27.4 12.6L35.6 4.4A5.8 5.8 0 0 0 27.4 12.6Z" fill="#d0d0d0"/>
 <path d="M49.5 2H61.5V5.5H60L59.5 4H57V13H59V14.5H52V13H54V4H51.5L51 5.5H49.5Z" fill="#d0d0d0"/>
 <rect x="75.5" y="3.5" width="10" height="9" fill="none" stroke="#d0d0d0" stroke-width="1.2"/>
 <path d="M73.5 1.5h3v3h-3zM84.5 1.5h3v3h-3zM73.5 11.5h3v3h-3zM84.5 11.5h3v3h-3z" fill="#535353" stroke="#d0d0d0" stroke-width="1"/>
 <path d="M100 1.5H106L109.5 5V14.5H100Z" fill="none" stroke="#d0d0d0" stroke-width="1.2"/>
 <rect x="98" y="8" width="5" height="6" fill="#d0d0d0"/>
 <rect x="123" y="8" width="6" height="9" rx="1" fill="#3e3e3e"/>
 <circle cx="126" cy="5" r="4" fill="#e8e8e8"/>
</svg>
<div class="a" style="left:1082px;top:559px;width:282px;height:1px;background:#474747"></div>
<div class="a" style="left:1086px;top:564px;width:127px;height:20px;background:#474747;border:1px solid #3d3d3d"></div>
<div class="t" style="left:1093px;top:567px;font-size:11px;color:#e0e0e0">Normal</div>
<svg class="s" style="left:1201px;top:571px" width="9" height="6"><path d="M1 1L4.5 4.5L8 1" fill="none" stroke="#c0c0c0" stroke-width="1.2"/></svg>
<div class="t" style="left:1220px;top:567px;font-size:11px;color:#c8c8c8;letter-spacing:-0.3px">Opacity:</div>
<div class="fld" style="left:1263px;top:565px;width:49px;height:16px;line-height:14px;padding-left:3px">100%</div>
<div class="a" style="left:1296px;top:566px;width:1px;height:14px;background:#3b3b3b"></div>
<svg class="s" style="left:1300px;top:571px" width="9" height="6"><path d="M1 1L4.5 4.5L8 1" fill="none" stroke="#c0c0c0" stroke-width="1.2"/></svg>
<div class="a" style="left:1082px;top:587px;width:282px;height:1px;background:#474747"></div>
<div class="t" style="left:1087px;top:595px;font-size:11px;color:#c8c8c8;letter-spacing:-0.3px">Lock:</div>
<svg class="s" style="left:1119px;top:594px" width="102" height="15">
 <path d="M1 2h3v3h-3zM7 2h3v3h-3zM4 5h3v3h-3zM1 8h3v3h-3zM7 8h3v3h-3zM4 11h3v3h-3z" fill="#9a9a9a"/>
 <rect x="0.5" y="1.5" width="11" height="12.5" fill="none" stroke="#9a9a9a" stroke-width="1"/>
 <path d="M25 14L34 2" stroke="#9a9a9a" stroke-width="2.2"/><path d="M22 15C22 12 24 11 26 12C26 14 24 15 22 15Z" fill="#9a9a9a"/>
 <path d="M50.5 1V14M44 7.5H57" stroke="#d8d8d8" stroke-width="1.4"/><path d="M50.5 0L48 2.5H53ZM50.5 15L48 12.5H53ZM43 7.5L45.5 5V10ZM58 7.5L55.5 5V10Z" fill="#d8d8d8"/>
 <path d="M69 1V12H80M67 4H78V15" fill="none" stroke="#d8d8d8" stroke-width="1.4"/><path d="M75 1.5H80V6" fill="none" stroke="#d8d8d8" stroke-dasharray="1 1"/>
 <rect x="90" y="7" width="11" height="8" fill="#d8d8d8"/><path d="M92.5 7V4.5A3 3 0 0 1 98.5 4.5V7" fill="none" stroke="#d8d8d8" stroke-width="1.6"/><rect x="94.8" y="9.5" width="1.5" height="3" fill="#535353"/>
</svg>
<div class="t" style="left:1242px;top:595px;font-size:11px;color:#c8c8c8;letter-spacing:-0.3px">Fill:</div>
<div class="fld" style="left:1263px;top:593px;width:49px;height:16px;line-height:14px;padding-left:3px">100%</div>
<div class="a" style="left:1296px;top:594px;width:1px;height:14px;background:#3b3b3b"></div>
<svg class="s" style="left:1300px;top:599px" width="9" height="6"><path d="M1 1L4.5 4.5L8 1" fill="none" stroke="#c0c0c0" stroke-width="1.2"/></svg>
<div class="a" style="left:1082px;top:615px;width:266px;height:1px;background:#474747"></div>
<!-- layer rows -->
<div class="a" style="left:1111px;top:617px;width:238px;height:40px;background:#6b6b6b"></div>
<div class="a" style="left:1082px;top:657px;width:266px;height:1px;background:#474747"></div>
<div class="a" style="left:1082px;top:691px;width:266px;height:1px;background:#474747"></div>
<div class="a" style="left:1110px;top:617px;width:1px;height:85px;background:#474747"></div>
<svg class="s" style="left:1089px;top:632px" width="15" height="10"><path d="M0.5 5C3 1 12 1 14.5 5C12 9 3 9 0.5 5Z" fill="#dcdcdc"/><circle cx="7.5" cy="5" r="2.3" fill="#535353"/><circle cx="7.5" cy="5" r="1.1" fill="#dcdcdc"/></svg>
<svg class="s" style="left:1089px;top:670px" width="15" height="10"><path d="M0.5 5C3 1 12 1 14.5 5C12 9 3 9 0.5 5Z" fill="#dcdcdc"/><circle cx="7.5" cy="5" r="2.3" fill="#535353"/><circle cx="7.5" cy="5" r="1.1" fill="#dcdcdc"/></svg>
<svg class="s" style="left:1112px;top:618px" width="39" height="37">
 <path d="M1 7V1H8M31 1H38V7M38 30V36H31M8 36H1V30" fill="none" stroke="#f0f0f0" stroke-width="1.3"/>
 <path d="M12 14V11H27V14M19.5 11V27M16 27H23" fill="none" stroke="#e8e8e8" stroke-width="1.8"/>
</svg>
<div class="t" style="left:1157px;top:631px;font-size:10.5px;color:#f0f0f0;letter-spacing:-0.3px">WWW.MUMA.IR</div>
<div class="a" style="left:1116px;top:663px;width:32px;height:23px;background-color:#fff;background-image:linear-gradient(45deg,#ccc 25%,transparent 25%,transparent 75%,#ccc 75%),linear-gradient(45deg,#ccc 25%,transparent 25%,transparent 75%,#ccc 75%);background-size:8px 8px;background-position:0 0,4px 4px"></div>
<div class="t" style="left:1157px;top:668px;font-size:11px;color:#e0e0e0;letter-spacing:-0.2px">Layer 2</div>
<div class="a" style="left:1116px;top:697px;width:32px;height:6px;background-color:#fff;background-image:linear-gradient(45deg,#ccc 25%,transparent 25%,transparent 75%,#ccc 75%),linear-gradient(45deg,#ccc 25%,transparent 25%,transparent 75%,#ccc 75%);background-size:8px 8px;background-position:0 0,4px 4px"></div>
<div class="a" style="left:1351px;top:618px;width:11px;height:84px;background:#4a4a4a"></div>
<svg class="s" style="left:1352px;top:624px" width="9" height="6"><path d="M1 5L4.5 1.5L8 5" fill="none" stroke="#8a8a8a" stroke-width="1.1"/></svg>
<div class="a" style="left:1352px;top:633px;width:9px;height:13px;background:#6a6a6a"></div>
<svg class="s" style="left:1352px;top:689px" width="9" height="6"><path d="M1 1L4.5 4.5L8 1" fill="none" stroke="#8a8a8a" stroke-width="1.1"/></svg>
<div class="a" style="left:1080px;top:702px;width:284px;height:25px;background:#535353;border-top:1px solid #474747"></div>
<svg class="s" style="left:1160px;top:706px" width="180" height="18">
 <g fill="none" stroke="#8c8c8c" stroke-width="1.5"><path d="M8 6H5A3 3 0 0 0 5 12H8M10 6H13A3 3 0 0 1 13 12H10M6 9H12"/></g>
 <text x="35" y="14" font-size="14" font-style="italic" font-family="Liberation Serif" fill="#d8d8d8">fx</text>
 <path d="M46 15l2 0l-1 2z" fill="#d8d8d8"/>
 <rect x="57" y="3" width="14" height="11" fill="#d8d8d8"/><circle cx="64" cy="8.5" r="3.2" fill="#535353"/>
 <circle cx="91" cy="9" r="5.8" fill="none" stroke="#d8d8d8" stroke-width="1.2"/><path d="M87 13L95 5A5.8 5.8 0 0 1 87 13Z" fill="#d8d8d8"/><path d="M95 15l2 0l-1 2z" fill="#d8d8d8"/>
 <path d="M111 4H116L117.5 6H124V15H111Z" fill="#d8d8d8"/>
 <rect x="139.5" y="3.5" width="11" height="11" fill="none" stroke="#d8d8d8" stroke-width="1.2"/><path d="M145 6V12M142 9H148" stroke="#d8d8d8" stroke-width="1.2"/>
 <path d="M166 5H178M170 5V3H174V5M167.5 6V16H176.5V6M170.5 8V14M173.5 8V14" fill="none" stroke="#d8d8d8" stroke-width="1.3"/>
</svg>
<!-- TASKBAR -->
<!-- CONTEXT MENU -->
<div class="a" style="left:818px;top:252px;width:287px;height:68px;background:rgba(0,0,0,0.35);filter:blur(2px)"></div>
<div class="a" style="left:816px;top:250px;width:286px;height:67px;background:#f0f0f0;border:1px solid #c4c4c4"></div>
<div class="a" style="left:818px;top:269px;width:281px;height:17px;background:#0b63d9"></div>
<div class="a" style="left:818px;top:291px;width:281px;height:1px;background:#cfcfcf"></div>
<div class="t" style="left:837px;top:254.5px;font-size:12px;letter-spacing:0.12px;color:#111">1600966930_free-business-card-professional</div>
<div class="t" style="left:837px;top:271px;font-size:12px;color:#d8ecff">Background</div>
<div class="t" style="left:837px;top:299px;font-size:12px;color:#111">Isolate Layers</div>
<svg class="s" style="left:847px;top:271px" width="12" height="19"><path d="M0.5 0.5V15.5L4.2 12L6.8 18L9 17L6.5 11H11.5Z" fill="#fff" stroke="#000" stroke-width="1"/></svg>
<!-- MUMA BANNER -->
<svg class="s" style="left:0;top:640px" width="400" height="90">
  <path d="M60 11H357V53A31 31 0 0 1 326 84H60Z" fill="#fefefe"/>
  <rect x="103" y="56" width="254" height="2" fill="#2a739f"/>
  <circle cx="60" cy="47.2" r="37.2" fill="#28709e"/>
  <g fill="none" stroke="#fff" stroke-width="4.6">
    <path d="M39 46.5V31A5.25 5.25 0 0 1 49.5 31V46.5M49.5 31A5.25 5.25 0 0 1 60 31V46.5"/>
    <path d="M67.1 24V38A6.5 6.5 0 0 0 80.1 38V24"/>
    <path d="M39 70.5V55A5.25 5.25 0 0 1 49.5 55V70.5M49.5 55A5.25 5.25 0 0 1 60 55V70.5"/>
    <path d="M67.1 70.5V55A6.5 6.5 0 0 1 80.1 55V70.5"/>
  </g>
  <circle cx="73.6" cy="59.8" r="2.3" fill="#fff"/>
</svg>
<svg class="s" style="left:104px;top:665.5px" width="223" height="21" viewBox="0 0 2149 203" preserveAspectRatio="none"><path d="M1661 150 1647 165 1662 179 1676 164ZM1628 150 1614 165 1629 179 1643 164ZM1800 168 1808 188 1824 184 1842 176 1857 164 1865 153 1872 135 1903 134 1912 131 1923 122 1932 130 1946 135 1967 135 1976 133 1985 128 1991 122 2000 131 2012 135 2024 135 2033 132 2044 122 2051 129 2060 134 2080 134 2088 130 2094 124 2101 107 2102 80 2098 60 2077 66 2081 82 2081 102 2077 109 2070 112 2063 111 2056 102 2053 72 2033 75 2034 101 2032 106 2026 111 2012 111 2005 105 2002 95 2000 72 1980 75 1981 100 1975 109 1963 112 1942 110 1935 101 1933 70 1912 73 1913 98 1911 104 1906 109 1894 112 1874 112 1868 85 1860 71 1855 66 1844 60 1825 60 1816 65 1810 71 1802 86 1800 94 1800 111 1802 118 1810 128 1818 132 1830 135 1849 135 1850 137 1847 143 1832 156 1809 165 1801 166ZM1829 83 1838 82 1847 89 1852 104 1851 112 1828 111 1821 106 1820 98 1822 91ZM1679 59 1658 64 1662 97 1659 106 1650 112 1611 112 1609 110 1606 89 1600 76 1589 64 1583 61 1566 59 1559 61 1550 67 1540 82 1536 98 1537 113 1541 122 1547 128 1557 133 1587 136 1581 146 1570 155 1555 162 1536 167 1544 188 1566 182 1586 171 1599 157 1609 135 1653 135 1668 130 1677 120 1682 105 1683 88ZM1565 83 1574 82 1582 87 1588 101 1588 112 1571 112 1562 110 1558 107 1557 96 1559 90ZM157 167 165 188 187 182 207 171 217 161 223 152 230 135 247 135 254 133 261 129 269 121 279 129 291 135 299 137 311 137 318 135 330 126 336 114 337 92 334 82 330 75 316 63 307 60 289 61 280 66 273 73 258 98 249 109 242 112 232 112 230 110 230 102 225 84 219 73 210 64 197 59 180 61 169 69 161 82 157 98 159 116 162 122 173 131 188 135 208 136 202 146 191 155 176 162ZM295 83 307 83 315 91 317 99 316 106 309 114 295 112 281 101 287 90ZM186 83 195 82 203 87 209 101 209 112 192 112 183 110 179 107 178 96 180 90ZM1038 59 1026 58 1014 62 1003 73 996 88 994 102 995 112 999 122 1005 128 1015 133 1024 135 1045 134 1042 142 1031 153 1013 162 995 166 1003 188 1026 181 1044 171 1059 154 1066 137 1068 107 1062 82 1051 66ZM1022 83 1026 81 1033 81 1040 86 1046 99 1046 110 1027 112 1017 108 1015 104 1015 96ZM713 76 690 71 646 52 629 50 621 52 611 58 602 67 594 80 613 88 624 76 630 73 638 73 675 88 636 106 604 112 577 111 572 108 568 102 565 70 545 72 546 95 544 100 534 108 509 112 471 112 453 110 435 103 431 99 428 92 428 80 432 66 413 59 407 79 407 98 412 112 421 122 432 128 450 133 467 135 521 134 537 130 554 119 564 130 573 134 609 135 624 133 641 128 694 102 712 97ZM1153 52 1141 65 1136 73 1137 75 1154 83 1166 70 1173 67 1178 67 1205 78 1172 92 1162 99 1146 117 1138 138 1138 159 1145 178 1160 192 1173 198 1193 202 1231 200 1256 193 1257 191 1251 171 1219 179 1190 179 1174 174 1168 170 1162 163 1158 152 1159 139 1163 130 1179 114 1195 105 1214 98 1254 91 1254 70 1225 63 1195 49 1182 45 1164 46ZM1729 34 1719 55 1743 70 1756 83 1760 90 1760 100 1752 108 1736 112 1714 112 1701 109 1701 133 1714 135 1737 135 1757 131 1768 125 1775 118 1780 108 1781 87 1779 79 1773 68 1759 53ZM506 34 504 34 490 48 505 63 520 48ZM472 33 457 48 472 63 487 48ZM1921 23 1907 38 1922 53 1935 40 1936 37ZM1889 23 1874 38 1889 53 1904 38ZM643 5 628 20 643 35 645 35 659 21 659 19 645 5ZM2126 0 2126 135 2148 135 2148 0ZM1461 68 1456 62 1444 54 1433 51 1420 51 1406 56 1386 71 1385 0 1364 0 1364 102 1357 112 1336 111 1327 101 1321 76 1300 82 1299 84 1306 108 1306 133 1300 146 1291 155 1279 162 1262 167 1270 188 1290 182 1308 170 1317 159 1328 131 1338 135 1404 135 1428 132 1447 125 1459 115 1466 100 1467 86 1465 76ZM1444 84 1445 96 1441 102 1433 107 1404 112 1382 111 1392 96 1404 84 1417 76 1431 74 1438 77ZM735 0 735 101 738 114 748 128 761 134 790 135 803 131 814 122 821 130 834 135 846 135 857 131 867 122 880 133 897 135 909 131 918 122 922 113 925 96 924 76 921 60 900 66 904 86 904 99 902 106 893 112 884 110 879 103 876 72 856 75 857 97 854 107 849 111 838 112 834 111 828 106 825 99 823 72 803 75 804 98 799 108 785 112 774 112 763 109 757 100 757 0ZM0 0 0 101 3 114 8 123 20 132 33 135 48 135 56 133 70 122 90 134 101 137 117 136 127 131 135 121 138 113 139 93 137 85 131 74 124 67 112 61 95 60 82 66 74 74 57 102 49 110 44 112 32 111 24 105 22 100 22 0ZM99 82 109 83 117 92 118 106 116 110 110 114 99 113 83 102 88 91Z" fill="#1e1e1e" fill-rule="evenodd"/></svg>
<svg class="s" style="left:238.5px;top:700.8px" width="60" height="17.7" viewBox="0 0 723 200" preserveAspectRatio="none"><path d="M685 172 671 186 684 199 698 186ZM355 151 341 165 356 179 369 164ZM388 150 374 164 388 179 402 165ZM303 150 289 165 304 179 318 164ZM701 148 688 161 702 174 715 161ZM667 148 654 161 668 174 681 161ZM8 107 0 116 0 126 6 133 18 135 27 128 29 123 28 115 20 107ZM219 62 217 61 199 66 203 99 200 108 196 112 189 114 117 114 119 125 124 135 147 135 152 137 157 144 154 150 147 156 127 163 98 163 89 160 79 152 72 135 72 118 77 96 59 90 54 106 52 130 54 145 61 162 76 177 84 181 100 185 130 184 145 180 155 175 167 165 173 155 175 148 174 135 199 134 208 130 215 123 219 115 222 102 222 82ZM8 49 0 58 0 68 6 75 18 77 27 70 29 65 28 57 20 49ZM602 28 589 41 603 55 616 41ZM570 28 556 41 569 55 583 41ZM469 25 455 39 469 54 483 40ZM436 25 422 39 436 54 450 40ZM198 16 184 31 198 45 200 45 214 30ZM586 3 573 16 586 30 599 17ZM247 0 247 105 254 123 262 130 272 134 306 134 318 129 327 122 335 130 344 134 374 135 392 128 399 121 406 129 416 134 445 135 462 129 471 121 481 131 493 135 515 135 523 133 537 122 547 131 559 135 570 135 583 130 591 122 602 132 611 135 628 133 640 122 646 129 657 134 694 135 706 131 714 124 721 107 722 84 719 63 717 61 699 66 703 94 702 103 697 111 689 114 664 114 657 112 651 106 649 101 647 73 628 75 628 105 623 112 618 114 607 111 602 103 599 74 581 77 581 103 579 108 573 113 562 114 552 108 548 96 547 74 528 77 529 99 527 106 522 111 509 114 492 113 485 109 481 101 479 72 460 74 460 102 457 108 449 113 427 114 416 111 411 106 409 101 407 72 388 74 388 103 383 110 377 113 355 114 343 111 337 102 335 72 316 74 316 101 314 106 309 111 300 114 277 113 269 107 266 96 266 0Z" fill="#1d4863" fill-rule="evenodd"/></svg>
<div class="t" style="left:107px;top:699px;font-size:15.5px;line-height:16px;font-weight:bold;letter-spacing:0.65px;color:#1d4863">021 - 7105 7370</div>
<div id="taskbar" class="a">
  <svg class="s" style="left:15px;top:14px" width="18" height="16"><path d="M0 2.2L7.3 1.2V7.4H0ZM8.3 1L17.5 0V7.4H8.3ZM0 8.4H7.3V14.6L0 13.6ZM8.3 8.4H17.5V15.8L8.3 14.8Z" fill="#f4f4f4"/></svg>
  <div class="a" style="left:48px;top:1px;width:344px;height:40px;background:#363636;border:1px solid #5c5c5c;border-right-color:#4a4a4a;border-bottom:none"></div>
  <svg class="s" style="left:58px;top:13px" width="20" height="17"><circle cx="12.3" cy="6.3" r="5.3" fill="none" stroke="#e8e8e8" stroke-width="1.6"/><path d="M8.6 10L1 16.5" stroke="#e8e8e8" stroke-width="1.6"/></svg>
  <div class="t" style="left:88px;top:13px;font-size:14.5px;line-height:16px;color:#d6d6d6">Type here to search</div>
  <svg class="s" style="left:408px;top:13px" width="16" height="16"><circle cx="8" cy="8" r="6.6" fill="none" stroke="#f0f0f0" stroke-width="2"/></svg>
  <svg class="s" style="left:455px;top:13px" width="18" height="16"><rect x="3.5" y="3.5" width="11" height="8" fill="none" stroke="#e8e8e8" stroke-width="1.4"/><path d="M1 1H17M1 15H17" stroke="#e8e8e8" stroke-width="1.4"/><path d="M17 5V10" stroke="#e8e8e8" stroke-width="1.4"/></svg>
  <svg class="s" style="left:503px;top:12px" width="24" height="20"><path d="M1 3H9L11 5H23V19H1Z" fill="#e8b53c"/><path d="M1 7H23V19H1Z" fill="#f8d46a"/><rect x="8" y="10" width="9" height="7" fill="#4a8fd8"/><rect x="9" y="13" width="7" height="5" fill="#2c6cb8"/></svg>
  <svg class="s" style="left:552px;top:10px" width="24" height="24"><circle cx="12" cy="12" r="11.5" fill="#dd4a3c"/><path d="M12 12L2.3 6.4A11.5 11.5 0 0 1 21.7 6.4Z" fill="#e04c3d"/><path d="M12 12L2.3 6.4A11.5 11.5 0 0 0 12 23.5Z" fill="#2ea251"/><path d="M12 12L12 23.5A11.5 11.5 0 0 0 21.7 6.4Z" fill="#f4c20d"/><circle cx="12" cy="12" r="5.3" fill="#fff"/><circle cx="12" cy="12" r="4.2" fill="#4a8af4"/></svg>
  <svg class="s" style="left:601px;top:10px" width="23" height="23"><circle cx="11.5" cy="11.5" r="11.3" fill="#2f9fd6"/><path d="M4.5 11L17 6L15 17L11 14L9 16L9 13L15 8L8 12.5Z" fill="#fff"/></svg>
  <svg class="s" style="left:650px;top:10px" width="23" height="23"><circle cx="11.5" cy="11" r="10.3" fill="#fff"/><path d="M2 22L3.5 17L6 20Z" fill="#fff"/><circle cx="11.5" cy="11" r="8.6" fill="#30b14a"/><path d="M8 6.5C7 7.5 7 9.5 9 12C11 14.5 13.5 15.5 15 15C16 14.5 16 13.5 15.5 13L14 12.3L13 13.3C12 13 10.5 11.5 10 10.5L11 9.5L10.3 8L9.5 6.5Z" fill="#fff"/></svg>
  <svg class="s" style="left:699px;top:10px" width="24" height="24"><rect x="1" y="1" width="22" height="22" rx="5" fill="#2a8ed0"/><rect x="3" y="3" width="18" height="18" rx="3.5" fill="#f4fbff"/><rect x="2" y="2" width="9" height="7" rx="2" fill="#2a8ed0"/><rect x="4" y="4" width="5" height="3" rx="1" fill="#fff"/><path d="M7 11V18H12M14 11V18M17 11V18" fill="none" stroke="#2a8ed0" stroke-width="1.6"/></svg>
  <svg class="s" style="left:746px;top:9px" width="26" height="26"><circle cx="13" cy="13" r="12.3" fill="#1a1a1a"/><path d="M0.7 13A12.3 12.3 0 0 1 25.3 13Z" fill="#e2402e"/><text x="13" y="10.5" font-size="6" font-family="Liberation Sans" fill="#fff" text-anchor="middle">VPN</text><text x="13" y="19.5" font-size="7.5" font-weight="bold" font-family="Liberation Sans" fill="#fff" text-anchor="middle">Like</text></svg>
  <svg class="s" style="left:796px;top:9px" width="25" height="25"><path d="M22 2C15 3 10 7 7 13L12 18C18 15 22 10 23 3Z" fill="#f0f0f0"/><circle cx="15.5" cy="9.5" r="2.3" fill="#4a90d0"/><path d="M7 13L3 13L8 8L11 9ZM12 18L12 22L17 17L16 14Z" fill="#e85a3a"/><path d="M7 16C4 17 3 21 3 22C4 22 8 21 9 18Z" fill="#f4a02a"/></svg>
  <svg class="s" style="left:845px;top:9px" width="26" height="25"><rect x="0.5" y="0.5" width="25" height="24" rx="2" fill="#6b9e1f"/><path d="M19 6.5A8 8 0 1 0 19 18.5" fill="none" stroke="#e6f0c0" stroke-width="4"/><rect x="3" y="3" width="20" height="2" fill="#89b83a" opacity="0.6"/></svg>
  <svg class="s" style="left:895px;top:10px" width="24" height="24"><rect x="0.5" y="0.5" width="23" height="23" fill="#2f7ed8"/><path d="M0.5 23.5L9 12L14 17L18 13L23.5 19V23.5Z" fill="#0e3f8a"/><circle cx="17" cy="6.5" r="2.5" fill="#cfe6ff"/></svg>
  <svg class="s" style="left:947px;top:9px" width="19" height="25"><rect x="0.5" y="0.5" width="18" height="24" fill="#8fa4b8"/><rect x="2" y="2" width="15" height="5" fill="#5ab0e8"/><g fill="#eaf2fa"><rect x="2" y="9" width="4" height="3"/><rect x="7.5" y="9" width="4" height="3"/><rect x="13" y="9" width="4" height="3"/><rect x="2" y="13.5" width="4" height="3"/><rect x="7.5" y="13.5" width="4" height="3"/><rect x="13" y="13.5" width="4" height="3"/><rect x="2" y="18" width="4" height="3"/><rect x="7.5" y="18" width="4" height="3"/><rect x="13" y="18" width="4" height="5" fill="#3b6ea8"/></g></svg>
  <div class="a" style="left:981px;top:1px;width:48px;height:40px;background:#5c5c5c"></div>
  <div class="a" style="left:994px;top:11px;width:22px;height:20px;background:#001e36;border-radius:2px"></div>
  <div class="t" style="left:997px;top:15px;font-size:11px;line-height:12px;font-weight:bold;color:#31a8ff">Ps</div>
  <div class="a" style="left:494px;top:38px;width:41px;height:2px;background:#7fb6e8"></div>
  <div class="a" style="left:544px;top:38px;width:40px;height:2px;background:#7fb6e8"></div>
  <div class="a" style="left:887px;top:38px;width:40px;height:2px;background:#7fb6e8"></div>
  <div class="a" style="left:936px;top:38px;width:40px;height:2px;background:#7fb6e8"></div>
  <div class="a" style="left:981px;top:38px;width:48px;height:2px;background:#8cc0f0"></div>
  <svg class="s" style="left:1146px;top:16px" width="13" height="8"><path d="M1 7L6.5 1.5L12 7" fill="none" stroke="#e6e6e6" stroke-width="1.4"/></svg>
  <svg class="s" style="left:1168px;top:14px" width="17" height="14"><rect x="4.5" y="1.5" width="11.5" height="8" fill="none" stroke="#e6e6e6" stroke-width="1.2"/><rect x="1" y="1" width="5" height="4" fill="#333" stroke="#e6e6e6" stroke-width="1"/><path d="M10 10V13M6 13.3H14" stroke="#e6e6e6" stroke-width="1.2"/></svg>
  <svg class="s" style="left:1192px;top:14px" width="18" height="15"><path d="M1 5H4L8 1.5V13.5L4 10H1Z" fill="none" stroke="#e6e6e6" stroke-width="1.2"/><path d="M10.5 5A3 3 0 0 1 10.5 10M12.5 3A6 6 0 0 1 12.5 12M14.5 1A9 9 0 0 1 14.5 14" fill="none" stroke="#e6e6e6" stroke-width="1.2"/></svg>
  <div class="t" style="left:1219px;top:15px;font-size:11.5px;line-height:12px;color:#ececec">ENG</div>
  <div class="t" style="left:1254px;top:5px;font-size:11px;line-height:12px;color:#ececec;letter-spacing:-0.2px">02:05</div>
  <svg class="s" style="left:1283px;top:6px" width="24.5" height="11" viewBox="0 0 357 177" preserveAspectRatio="none"><path d="M282 149 269 163 283 176 296 162ZM161 108 153 115 152 123 157 131 168 133 175 128 177 124 177 117 172 110 168 108ZM203 76 202 96 204 105 209 114 221 124 242 131 259 133 312 133 327 131 344 124 352 115 356 104 356 79 353 64 337 68 340 84 340 102 338 106 329 113 315 116 259 116 236 112 225 106 219 97 218 81 221 69 207 64ZM88 8 75 22 89 35 102 22ZM30 0 30 104 22 116 0 116 0 133 72 133 95 129 113 121 123 110 127 99 127 84 122 71 116 64 106 58 87 55 68 61 57 69 47 80 46 0ZM110 85 110 100 104 107 97 111 88 114 71 116 40 115 59 89 72 78 87 72 98 73 102 75Z" fill="#ececec" fill-rule="evenodd"/></svg>
  <svg class="s" style="left:1256.6px;top:24.8px" width="47.6" height="9.2" viewBox="0 0 810 155" preserveAspectRatio="none"><path d="M781 13 762 12 749 16 737 26 728 45 728 62 732 71 742 80 760 87 737 119 728 136 728 138 745 145 773 103 791 85 809 73 804 53 778 69 758 65 748 57 747 51 750 43 757 36 763 33 774 32 788 38 794 20ZM312 15 302 24 294 40 292 55 295 70 300 77 311 83 323 85 337 85 344 83 346 85 347 142 367 142 365 65 363 48 359 34 353 23 341 14 335 12 321 12ZM321 33 330 32 340 40 344 51 344 63 333 65 319 64 312 59 311 50 313 43ZM216 14 203 25 196 39 194 49 196 68 203 78 213 83 224 85 247 84 248 142 269 142 266 57 260 32 254 22 243 14 236 12 222 12ZM221 34 225 32 232 32 241 39 246 52 246 63 234 65 221 64 214 59 214 45ZM683 11 666 18 675 42 680 67 683 142 703 142 703 107 699 61 690 24 685 12ZM545 11 528 18 537 42 542 67 545 142 565 142 565 107 561 61 552 24 547 12ZM468 18 477 41 483 73 485 142 505 142 505 101 501 59 496 36 487 11ZM175 13 156 14 156 43 153 49 148 52 143 52 136 46 134 39 133 18 116 18 114 46 107 52 98 51 93 47 78 11 60 18 69 42 74 67 77 142 97 142 97 106 94 73 109 73 115 71 124 63 134 71 143 73 152 73 162 69 169 61 173 52 176 32ZM0 18 9 41 15 73 17 142 37 142 37 101 33 59 28 36 19 11ZM652 0 635 0 580 154 598 153ZM455 0 437 0 382 154 400 154Z" fill="#ececec" fill-rule="evenodd"/></svg>
  <svg class="s" style="left:1324px;top:12px" width="18" height="16"><path d="M1 1H17V11.5H11L9 14L7 11.5H1Z" fill="none" stroke="#f0f0f0" stroke-width="1.2"/></svg>
  <div class="a" style="left:1359px;top:1px;width:1px;height:40px;background:#6a6a6a"></div>
</div>
</body></html>
